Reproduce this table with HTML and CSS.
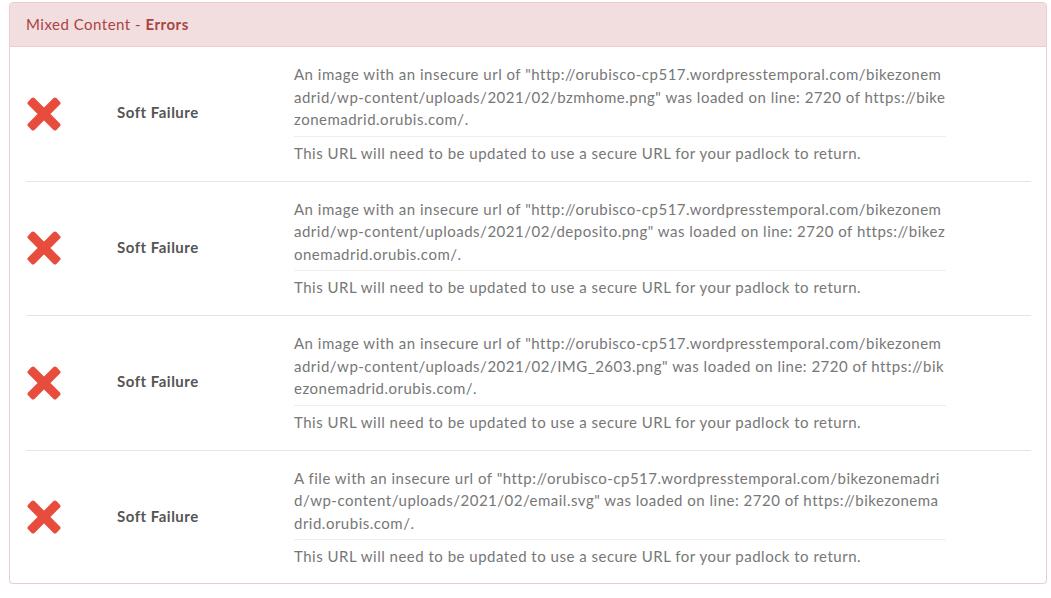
FILE: index.html
```html
<!DOCTYPE html>
<html lang="en">
<head>
  <meta charset="UTF-8" />
  <title>Mixed Content - Errors</title>
  <link rel="stylesheet" href="styles.css">
</head>
<body>

<div class="panel">
  <div class="panel-heading">Mixed Content - <strong>Errors</strong></div>
  <div class="panel-body">

    <div class="row">
      <div class="icon">
        <svg width="34" height="34" viewBox="0 0 34 34"><g fill="#e74c3c"><rect x="-3" y="12.5" width="40" height="9" rx="2" transform="rotate(45 17 17)"/><rect x="-3" y="12.5" width="40" height="9" rx="2" transform="rotate(-45 17 17)"/></g></svg>
      </div>
      <div class="label">Soft Failure</div>
      <div class="detail">
        <p class="msg">An image with an insecure url of "http://orubisco-cp517.wordpresstemporal.com/bikezonemadrid/wp-content/uploads/2021/02/bzmhome.png" was loaded on line: 2720 of https://bikezonemadrid.orubis.com/.</p>
        <p class="hint">This URL will need to be updated to use a secure URL for your padlock to return.</p>
      </div>
    </div>

    <div class="row">
      <div class="icon">
        <svg width="34" height="34" viewBox="0 0 34 34"><g fill="#e74c3c"><rect x="-3" y="12.5" width="40" height="9" rx="2" transform="rotate(45 17 17)"/><rect x="-3" y="12.5" width="40" height="9" rx="2" transform="rotate(-45 17 17)"/></g></svg>
      </div>
      <div class="label">Soft Failure</div>
      <div class="detail">
        <p class="msg">An image with an insecure url of "http://orubisco-cp517.wordpresstemporal.com/bikezonemadrid/wp-content/uploads/2021/02/deposito.png" was loaded on line: 2720 of https://bikezonemadrid.orubis.com/.</p>
        <p class="hint">This URL will need to be updated to use a secure URL for your padlock to return.</p>
      </div>
    </div>

    <div class="row">
      <div class="icon">
        <svg width="34" height="34" viewBox="0 0 34 34"><g fill="#e74c3c"><rect x="-3" y="12.5" width="40" height="9" rx="2" transform="rotate(45 17 17)"/><rect x="-3" y="12.5" width="40" height="9" rx="2" transform="rotate(-45 17 17)"/></g></svg>
      </div>
      <div class="label">Soft Failure</div>
      <div class="detail">
        <p class="msg">An image with an insecure url of "http://orubisco-cp517.wordpresstemporal.com/bikezonemadrid/wp-content/uploads/2021/02/IMG_2603.png" was loaded on line: 2720 of https://bikezonemadrid.orubis.com/.</p>
        <p class="hint">This URL will need to be updated to use a secure URL for your padlock to return.</p>
      </div>
    </div>

    <div class="row">
      <div class="icon">
        <svg width="34" height="34" viewBox="0 0 34 34"><g fill="#e74c3c"><rect x="-3" y="12.5" width="40" height="9" rx="2" transform="rotate(45 17 17)"/><rect x="-3" y="12.5" width="40" height="9" rx="2" transform="rotate(-45 17 17)"/></g></svg>
      </div>
      <div class="label">Soft Failure</div>
      <div class="detail">
        <p class="msg">A file with an insecure url of "http://orubisco-cp517.wordpresstemporal.com/bikezonemadrid/wp-content/uploads/2021/02/email.svg" was loaded on line: 2720 of https://bikezonemadrid.orubis.com/.</p>
        <p class="hint">This URL will need to be updated to use a secure URL for your padlock to return.</p>
      </div>
    </div>

  </div>
</div>

</body>
</html>
```

FILE: styles.css
```css
body {
  font-family: Lato, "Open Sans", Arial, sans-serif;
  font-size: 15px;
  letter-spacing: 0.5px;
  color: #777;
  margin: 0;
  padding: 2px 4px 0 9px;
  background: #fff;
}
.panel {
  border: 1px solid #ebccd1;
  border-radius: 4px;
  background: #fff;
  box-shadow: 0 1px 1px rgba(0,0,0,0.05);
}
.panel-heading {
  background: #f2dede;
  color: #a94442;
  border-bottom: 1px solid #ebccd1;
  border-radius: 3px 3px 0 0;
  padding: 11px 16px 12px;
  line-height: 20px;
}
.panel-heading strong {
  font-weight: bold;
}
.panel-body {
  padding: 0 15px 0 16px;
}
.row {
  display: grid;
  grid-template-columns: 91px 177px 652px;
  align-items: center;
  padding: 16px 0 16.5px;
  border-top: 1px solid #e5e5e5;
}
.row:first-child {
  border-top: none;
}
.row:last-child {
  padding-bottom: 15px;
}
.icon {
  padding-left: 1px;
  display: flex;
}
.label {
  font-weight: bold;
  color: #555;
  padding-bottom: 3px;
}
.detail p {
  margin: 0;
  line-height: 22.5px;
}
.msg {
  word-break: break-all;
  padding-bottom: 5px;
  border-bottom: 1px solid #eee;
  margin-bottom: 5px !important;
}
```
